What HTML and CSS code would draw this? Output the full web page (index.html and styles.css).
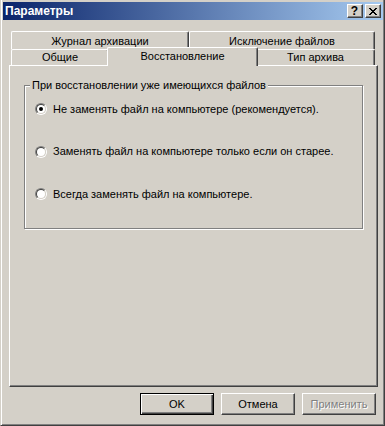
FILE: index.html
```html
<!DOCTYPE html>
<html>
<head>
<meta charset="utf-8">
<link rel="stylesheet" href="styles.css">
</head>
<body>
<div class="window">
  <div class="titlebar">
    <span class="title">Параметры</span>
    <div class="caption-btns">
      <div class="cbtn help">?</div>
      <div class="cbtn close"><svg width="8" height="7" viewBox="0 0 8 7" shape-rendering="crispEdges"><path fill="#000" d="M0 0h2v1H0zM6 0h2v1H6zM1 1h2v1H1zM5 1h2v1H5zM2 2h4v1H2zM3 3h2v1H3zM2 4h4v1H2zM1 5h2v1H1zM5 5h2v1H5zM0 6h2v1H0zM6 6h2v1H6z"/></svg></div>
    </div>
  </div>
  <div class="client">
    <div class="tabs">
      <div class="tab-row back">
        <div class="tab w-journal">Журнал архивации</div>
        <div class="tab w-excl">Исключение файлов</div>
      </div>
      <div class="tab-row front">
        <div class="tab w-general">Общие</div>
        <div class="tab selected w-restore">Восстановление</div>
        <div class="tab w-type">Тип архива</div>
      </div>
    </div>
    <div class="panel">
      <div class="group">
        <span class="group-label">При восстановлении уже имеющихся файлов</span>
        <div class="option"><span class="radio"><span class="radio-in"><span class="dot"></span></span></span><span class="opt-text">Не заменять файл на компьютере (рекомендуется).</span></div>
        <div class="option"><span class="radio"><span class="radio-in"></span></span><span class="opt-text">Заменять файл на компьютере только если он старее.</span></div>
        <div class="option"><span class="radio"><span class="radio-in"></span></span><span class="opt-text">Всегда заменять файл на компьютере.</span></div>
      </div>
    </div>
    <div class="buttons">
      <div class="btn default">OK</div>
      <div class="btn">Отмена</div>
      <div class="btn disabled">Применить</div>
    </div>
  </div>
</div>
</body>
</html>
```
FILE: styles.css
```css
* { box-sizing: border-box; }
html, body { margin: 0; padding: 0; }
body {
  width: 385px;
  height: 426px;
  overflow: hidden;
  background: #D4D0C8;
  font-family: "Liberation Sans", Arial, sans-serif;
  font-size: 11px;
  color: #000;
}
.window {
  width: 385px;
  height: 426px;
  background: #D4D0C8;
  border-left: 1px solid #D4D0C8;
  border-right: 1px solid #404040;
  border-bottom: 1px solid #404040;
  box-shadow: inset 1px 0 0 #fff, inset -1px -1px 0 #808080;
  padding: 2px 1px 0 2px;
}
.titlebar {
  height: 18px;
  display: flex;
  align-items: center;
  padding: 0 2px 0 2px;
  background: linear-gradient(to right, #0A246A, #A6CAF0);
}
.title {
  color: #fff;
  font-weight: bold;
  font-size: 12px;
  line-height: 14px;
}
.caption-btns {
  margin-left: auto;
  display: flex;
  gap: 2px;
}
.cbtn {
  width: 16px;
  height: 14px;
  background: #D4D0C8;
  border: 1px solid;
  border-color: #fff #404040 #404040 #fff;
  box-shadow: inset -1px -1px 0 #808080;
  display: flex;
  align-items: center;
  justify-content: center;
}
.cbtn.help {
  font-weight: bold;
  font-size: 12px;
  line-height: 12px;
  padding-right: 1px;
}
.cbtn.close svg { display: block; margin-right: 1px; }
.client {
  padding: 11px 0 0 6px;
}
.tabs {
  margin-left: 2px;
  width: 364px;
}
.tab-row {
  display: flex;
  align-items: flex-end;
}
.tab-row.back { height: 18px; }
.tab-row.front { height: 16px; }
.tab {
  height: 100%;
  flex: none;
  background: #D4D0C8;
  border-top: 1px solid #fff;
  border-left: 1px solid #fff;
  border-right: 1px solid #404040;
  box-shadow: inset -1px 0 0 #808080;
  border-radius: 2px 2px 0 0;
  display: flex;
  align-items: center;
  justify-content: center;
  line-height: 13px;
  white-space: nowrap;
}
.back .tab { padding-top: 2px; }
.front .tab { padding-top: 0; }
.w-journal { width: 178px; }
.w-excl { width: 186px; }
.w-general { width: 98px; }
.w-restore { width: 151px; }
.w-type { width: 119px; }
.tab.selected {
  height: 19px;
  margin: 0 -2px -1px -2px;
  position: relative;
  z-index: 1;
  padding-top: 0;
  padding-bottom: 2px;
}
.panel {
  width: 369px;
  height: 322px;
  border-top: 1px solid #fff;
  border-left: 1px solid #fff;
  border-right: 1px solid #404040;
  border-bottom: 1px solid #404040;
  box-shadow: inset -1px -1px 0 #808080;
  padding: 19px 0 0 14px;
}
.group {
  position: relative;
  width: 339px;
  height: 144px;
  border: 1px solid #808080;
  box-shadow: 1px 1px 0 #fff, inset 1px 1px 0 #fff;
  padding: 16px 0 0 10px;
  display: flex;
  flex-direction: column;
  gap: 28.5px;
}
.group-label {
  position: absolute;
  top: -7px;
  left: 5px;
  padding: 0 2px;
  background: #D4D0C8;
  line-height: 13px;
  white-space: nowrap;
}
.option {
  height: 14px;
  display: flex;
  align-items: center;
  white-space: nowrap;
}
.radio {
  width: 12px;
  height: 12px;
  flex: none;
  border-radius: 50%;
  border: 1px solid;
  border-color: #808080 #fff #fff #808080;
}
.radio-in {
  display: flex;
  align-items: center;
  justify-content: center;
  width: 10px;
  height: 10px;
  border-radius: 50%;
  border: 1px solid;
  border-color: #404040 #D4D0C8 #D4D0C8 #404040;
  background: #fff;
}
.dot {
  width: 4px;
  height: 4px;
  border-radius: 50%;
  background: #000;
}
.opt-text {
  margin-left: 6px;
  line-height: 13px;
}
.buttons {
  width: 369px;
  margin-top: 6px;
  padding-right: 2px;
  display: flex;
  justify-content: flex-end;
  gap: 7px;
}
.btn {
  width: 74px;
  height: 22px;
  background: #D4D0C8;
  border: 1px solid;
  border-color: #fff #404040 #404040 #fff;
  box-shadow: inset -1px -1px 0 #808080;
  display: flex;
  align-items: center;
  justify-content: center;
  line-height: 13px;
}
.btn.default {
  border-color: #000;
  box-shadow: inset 1px 1px 0 #fff, inset -1px -1px 0 #404040, inset -2px -2px 0 #808080;
}
.btn.disabled {
  color: #808080;
  text-shadow: 1px 1px 0 #fff;
}
```
